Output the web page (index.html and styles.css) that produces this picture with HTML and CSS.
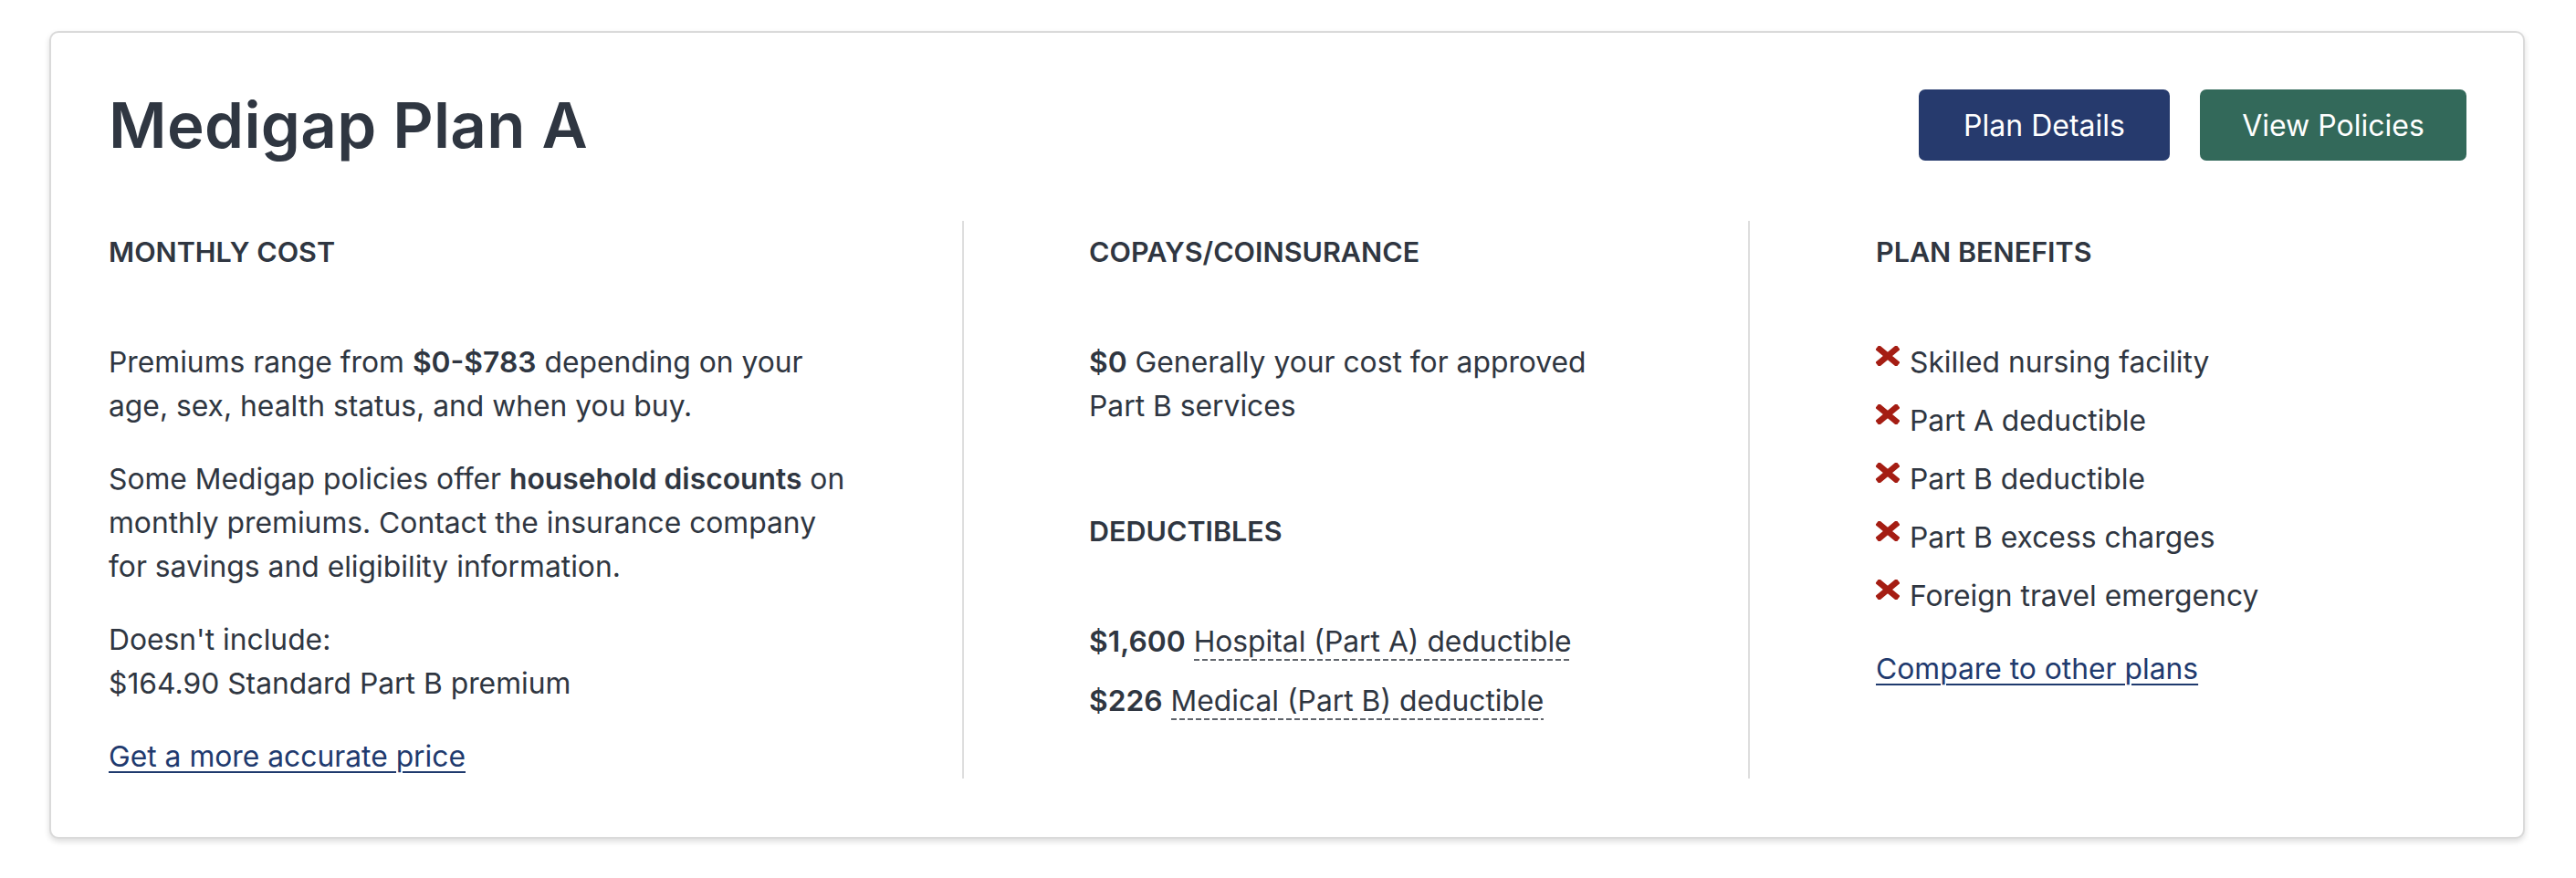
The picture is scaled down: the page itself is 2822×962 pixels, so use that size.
FILE: index.html
```html
<!DOCTYPE html>
<html lang="en">
<head>
<meta charset="utf-8">
<title>Medigap Plan A</title>
<link rel="stylesheet" href="styles.css">
</head>
<body>
<section class="card">
  <header class="card-head">
    <h1 class="title">Medigap Plan A</h1>
    <div class="actions">
      <a class="btn btn-navy" href="#">Plan Details</a>
      <a class="btn btn-green" href="#">View Policies</a>
    </div>
  </header>
  <div class="cols">
    <div class="col col-1">
      <h2 class="label">MONTHLY COST</h2>
      <p class="txt">Premiums range from <b>$0-$783</b> depending on your age, sex, health status, and when you buy.</p>
      <p class="txt">Some Medigap policies offer <b>household discounts</b> on monthly premiums. Contact the insurance company for savings and eligibility information.</p>
      <p class="txt">Doesn't include:<br>$164.90 Standard Part B premium</p>
      <p class="txt"><a class="link" href="#">Get a more accurate price</a></p>
    </div>
    <div class="col col-2">
      <h2 class="label">COPAYS/COINSURANCE</h2>
      <p class="txt"><b>$0</b> Generally your cost for approved Part B services</p>
      <h2 class="label label-gap">DEDUCTIBLES</h2>
      <p class="txt ded"><b>$1,600</b> <span class="dotted">Hospital (Part A) deductible</span></p>
      <p class="txt ded"><b>$226</b> <span class="dotted">Medical (Part B) deductible</span></p>
    </div>
    <div class="col col-3">
      <h2 class="label">PLAN BENEFITS</h2>
      <ul class="benefits">
        <li><svg class="xicon" viewBox="0 0 26 22" aria-hidden="true"><path d="M4 3.5 L22 18.5 M22 3.5 L4 18.5" stroke="#a51d13" stroke-width="6.6" stroke-linecap="square" fill="none"/></svg><span>Skilled nursing facility</span></li>
        <li><svg class="xicon" viewBox="0 0 26 22" aria-hidden="true"><path d="M4 3.5 L22 18.5 M22 3.5 L4 18.5" stroke="#a51d13" stroke-width="6.6" stroke-linecap="square" fill="none"/></svg><span>Part A deductible</span></li>
        <li><svg class="xicon" viewBox="0 0 26 22" aria-hidden="true"><path d="M4 3.5 L22 18.5 M22 3.5 L4 18.5" stroke="#a51d13" stroke-width="6.6" stroke-linecap="square" fill="none"/></svg><span>Part B deductible</span></li>
        <li><svg class="xicon" viewBox="0 0 26 22" aria-hidden="true"><path d="M4 3.5 L22 18.5 M22 3.5 L4 18.5" stroke="#a51d13" stroke-width="6.6" stroke-linecap="square" fill="none"/></svg><span>Part B excess charges</span></li>
        <li><svg class="xicon" viewBox="0 0 26 22" aria-hidden="true"><path d="M4 3.5 L22 18.5 M22 3.5 L4 18.5" stroke="#a51d13" stroke-width="6.6" stroke-linecap="square" fill="none"/></svg><span>Foreign travel emergency</span></li>
      </ul>
      <p class="txt"><a class="link" href="#">Compare to other plans</a></p>
    </div>
  </div>
</section>
</body>
</html>
```

FILE: styles.css
```css
* { box-sizing: border-box; }
html, body { margin: 0; padding: 0; background: #ffffff; }
body {
  font-family: Inter, "Noto Sans", "Liberation Sans", sans-serif;
  color: #2f3641;
  padding: 34px 56px 40px 54px;
}
.card {
  border: 2px solid #dadada;
  border-radius: 10px;
  box-shadow: 0 3px 6px rgba(0, 0, 0, 0.14);
  padding: 62px 62px 64px 63px;
  background: #fff;
}
.card-head {
  display: flex;
  align-items: center;
  justify-content: space-between;
  height: 78px;
}
.title {
  margin: 0;
  font-size: 69px;
  font-weight: 600;
  letter-spacing: 0.3px;
  line-height: 1;
  color: #2f3641;
}
.actions { display: flex; gap: 33px; }
.btn {
  display: flex;
  align-items: center;
  justify-content: center;
  height: 78px;
  border-radius: 7px;
  color: #fff;
  text-decoration: none;
  font-size: 32px;
  font-weight: 400;
}
.btn-navy { background: #263a6d; width: 275px; }
.btn-green { background: #33695a; width: 292px; }
.cols {
  display: flex;
  margin-top: 66px;
}
.col { padding-top: 14px; }
.col-1 {
  flex: 0 0 937px;
  padding-right: 123px;
  border-right: 2px solid #dedede;
}
.col-2 {
  flex: 0 0 861px;
  padding-left: 137px;
  padding-right: 130px;
  border-right: 2px solid #dedede;
}
.col-3 {
  flex: 1 1 auto;
  padding-left: 138px;
}
.label {
  margin: 0 0 77px;
  font-size: 30.5px;
  font-weight: 600;
  line-height: 40px;
  color: #2f3641;
}
.label-gap { margin-top: 93px; }
.txt {
  margin: 0 0 32px;
  font-size: 31.8px;
  line-height: 48px;
}
.txt:last-child { margin-bottom: 0; }
.txt b { font-weight: 600; }
.ded { margin-bottom: 17px; }
.dotted {
  padding-bottom: 2px;
  background-image: linear-gradient(to right, #5f646b 0 6px, transparent 6px 9px);
  background-size: 9px 2px;
  background-repeat: repeat-x;
  background-position: left bottom;
}
.link {
  color: #1f3a6e;
  text-decoration: underline;
  text-decoration-thickness: 2px;
  text-underline-offset: 5px;
}
.benefits {
  list-style: none;
  margin: 0 0 32px;
  padding: 0;
}
.benefits li {
  display: flex;
  align-items: flex-start;
  font-size: 31.8px;
  line-height: 48px;
  margin-bottom: 16px;
}
.benefits li:last-child { margin-bottom: 0; }
.xicon {
  width: 26px;
  height: 22px;
  flex: 0 0 26px;
  margin-top: 6px;
  margin-right: 11px;
}
```
